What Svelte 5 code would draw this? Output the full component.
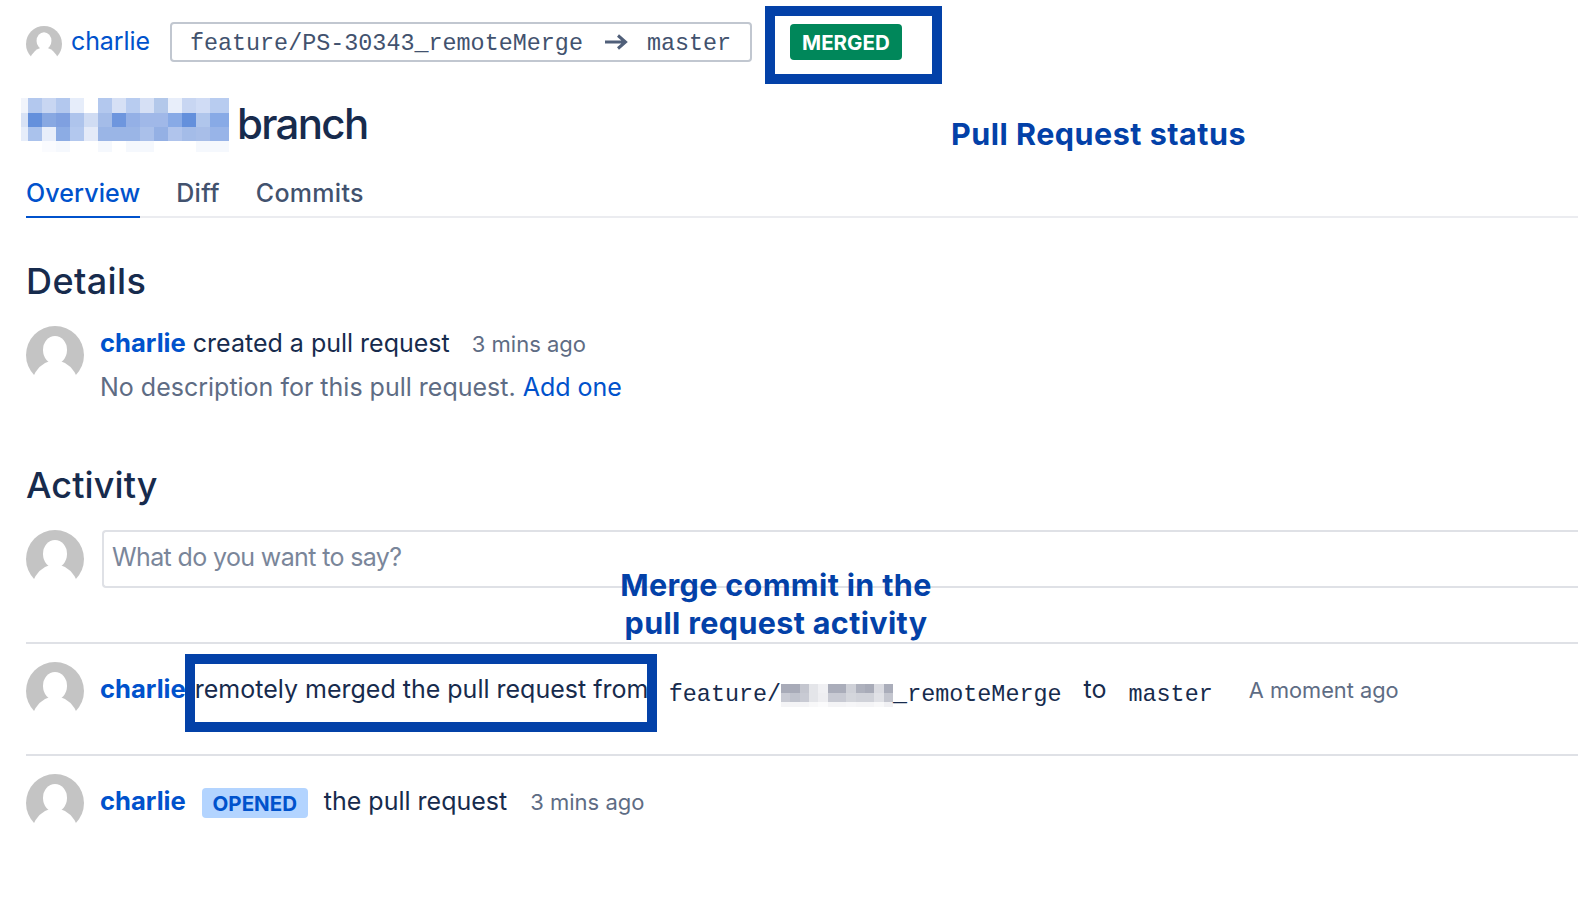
<script>
  const titleMosaic = [
    ['#f1f4fb','#b3c8ee','#c8d6f2','#b3c8ee','#e6edfa','#ffffff','#b3c8ee','#d6e0f5','#b8ccf0','#d6e0f5','#b3c8ea','#e8eefa','#c8d6f2','#d0dcf5','#b8ccf0'],
    ['#d8e2f5','#6490dc','#88a8e2','#7fa0e0','#aec4ec','#d0dcf3','#a4bce8','#6e96de','#94b0e6','#a0b8e8','#a0b8e8','#88aae6','#6490dc','#b0c6ec','#88aae6'],
    ['#e6edfa','#aac2ec','#e8eefa','#8cace4','#b3c8ee','#e4eaf8','#9ab5e6','#9ab5e6','#9ab5e6','#aac0ea','#94b0e4','#b0c4ec','#a4bce8','#a8bee8','#98b4e8'],
    ['#ffffff','#ffffff','#fafbfe','#f5f8fd','#ffffff','#ffffff','#f5f8fd','#ffffff','#f5f8fd','#f5f8fd','#ffffff','#ffffff','#ffffff','#f5f8fd','#f5f8fd']
  ];
  const branchMosaic = [
    ['#a8abb8','#a8abb8','#c4c6cf','#e4e5e9','#f0f0f3','#aaadba','#aaadba','#cfd1d8','#aeb1bd','#a8abb8','#dadbe1','#aaadba'],
    ['#c8cad3','#c0c3cd','#c8cad3','#e4e5e9','#eeeef1','#c8cad3','#c8cad3','#d4d6dc','#d0d2d9','#d0d2d9','#e0e1e6','#c4c6cf'],
    ['#f4f4f6','#f4f4f6','#f4f4f6','#f8f8f9','#fbfbfc','#f4f4f6','#f4f4f6','#f6f6f8','#f4f4f6','#f4f4f6','#f8f8f9','#f0f0f3']
  ];
</script>

{#snippet avatar(cls)}
  <svg class={cls} viewBox="0 0 58 58" aria-hidden="true">
    <circle cx="29" cy="29" r="29" fill="#c4c4c4" />
    <ellipse cx="29" cy="24" rx="12" ry="14" fill="#fff" />
    <path d="M6 53 Q12 38 24 35 L34 35 Q46 38 52 53 L52 58 L6 58 Z" fill="#fff" />
  </svg>
{/snippet}

<div class="page">
  <header class="top">
    {@render avatar('av-small')}
    <a class="author" href="#a">charlie</a>
    <div class="branches">
      <span>feature/PS-30343_remoteMerge</span>
      <svg class="arrow" viewBox="0 0 24 18" aria-hidden="true">
        <path d="M1 9 H21 M14 2.5 L21.5 9 L14 15.5" fill="none" stroke="#505f79" stroke-width="3" />
      </svg>
      <span>master</span>
    </div>
    <div class="frame status-frame"><span class="merged">MERGED</span></div>
  </header>

  <div class="title">
    <div class="mosaic title-mosaic">
      {#each titleMosaic as row}
        {#each row as c}<i style="background:{c}"></i>{/each}
      {/each}
    </div>
    <h1>branch</h1>
  </div>

  <nav class="tabs">
    <a class="tab active" href="#o">Overview</a>
    <a class="tab" href="#d">Diff</a>
    <a class="tab" href="#c">Commits</a>
  </nav>

  <h2 class="details">Details</h2>
  <section class="row created">
    {@render avatar('av')}
    <div>
      <p class="line"><a class="who" href="#a">charlie</a> created a pull request <span class="time first">3 mins ago</span></p>
      <p class="desc">No description for this pull request. <a href="#add">Add one</a></p>
    </div>
  </section>

  <h2 class="activity">Activity</h2>
  <section class="row compose">
    {@render avatar('av')}
    <div class="input">What do you want to say?</div>
  </section>

  <section class="row event merged-row">
    {@render avatar('av')}
    <a class="who" href="#a">charlie</a>
    <div class="frame text-frame">remotely merged the pull request from</div>
    <span class="mono ref">feature/<span class="mosaic branch-mosaic">
      {#each branchMosaic as row}
        {#each row as c}<i style="background:{c}"></i>{/each}
      {/each}
    </span>_remoteMerge</span>
    <span class="to">to</span>
    <span class="mono master">master</span>
    <span class="time moment">A moment ago</span>
  </section>

  <section class="row event opened-row">
    {@render avatar('av')}
    <a class="who" href="#a">charlie</a>
    <span class="opened">OPENED</span>
    <span class="txt">the pull request</span>
    <span class="time ago">3 mins ago</span>
  </section>

  <div class="note note-status">Pull Request status</div>
  <div class="note note-merge">Merge commit in the<br />pull request activity</div>
</div>

<style>
  :global(body) { margin: 0; background: #fff; }
  .page {
    position: relative;
    height: 902px;
    overflow: hidden;
    padding-left: 26px;
    box-sizing: border-box;
    font-family: Inter, "Liberation Sans", sans-serif;
    color: #172b4d;
  }
  a { color: #0052cc; text-decoration: none; }
  p, h1, h2 { margin: 0; }

  .top { display: flex; align-items: flex-start; padding-top: 6px; height: 78px; }
  .av-small { width: 36px; height: 36px; margin-top: 20px; flex: none; }
  .author { font-size: 25px; line-height: 30px; margin: 20px 0 0 9px; letter-spacing: -0.1px; }
  .branches {
    display: flex; align-items: center; box-sizing: border-box;
    height: 40px; margin: 16px 0 0 20px; width: 582px; padding: 3px 0 0 18px;
    border: 2px solid #c1c7d0; border-radius: 4px;
    font: 23.4px "Liberation Mono", monospace; color: #42526e;
  }
  .arrow { width: 24px; height: 18px; margin: -4px 19px 0 21px; }
  .frame { border: 10px solid #0341a8; box-sizing: border-box; }
  .status-frame { width: 177px; height: 78px; margin-left: 13px; padding: 8px 15px; }
  .merged {
    display: block; width: 112px; height: 36px; border-radius: 4px;
    background: #00875a; color: #fff; text-align: center;
    font-size: 20.5px; font-weight: 700; line-height: 38px;
  }

  .title { display: flex; align-items: flex-start; margin: 14px 0 0 -5px; height: 54px; }
  .mosaic { display: grid; }
  .mosaic i { display: block; }
  .title-mosaic {
    grid-template-columns: 7px repeat(13, 14px) 19px;
    grid-template-rows: 15px 14px 14px 11px;
    width: 208px; flex: none;
  }
  h1 { font-size: 42px; font-weight: 500; line-height: 52px; margin-left: 8px; letter-spacing: -1.7px; }

  .tabs { display: flex; gap: 36px; margin-top: 20px; border-bottom: 2px solid #ebecf0; height: 44px; }
  .tab { font-size: 25px; font-weight: 500; color: #42526e; line-height: 42px; height: 46px; box-sizing: border-box; letter-spacing: 0.3px; }
  .tab.active { color: #0052cc; border-bottom: 2px solid #0052cc; letter-spacing: 0.1px; }

  h2 { font-size: 36px; font-weight: 500; line-height: 42px; letter-spacing: 0.1px; }
  .details { margin: 42px 0 0 0; letter-spacing: 0.4px; }
  .activity { margin: -1px 0 0; }

  .row { display: flex; align-items: flex-start; }
  .av { width: 58px; height: 58px; flex: none; }
  .created { margin-top: 24px; height: 139px; gap: 16px; }
  .line { font-size: 25px; line-height: 36px; margin-top: -1px; }
  .who { font-weight: 700; font-size: 25.6px; }
  .time { color: #5e6c84; font-size: 22px; }
  .first { margin-left: 15px; }
  .desc { font-size: 25px; line-height: 36px; margin-top: 7px; color: #5e6c84; }

  .compose { margin-top: 24px; height: 112px; border-bottom: 2px solid #dfe1e6; gap: 18px; }
  .input {
    flex: 1; height: 58px; box-sizing: border-box;
    border: 2px solid #dfe1e6; border-right: 0; border-radius: 4px 0 0 4px;
    padding-left: 8px; font-size: 25px; line-height: 50px; color: #7a869a; letter-spacing: -0.63px;
  }

  .event { font-size: 25px; line-height: 36px; }
  .event .who { margin: 27px 0 0 16px; }
  .merged-row { height: 110px; border-bottom: 2px solid #dfe1e6; }
  .event .av { margin-top: 18px; }
  .text-frame { width: 472px; height: 78px; padding-top: 7px; white-space: nowrap; margin: 10px 0 0 -1px; flex: none; }
  .mono { font: 23.4px/36px "Liberation Mono", monospace; margin-top: 33px; }
  .ref { display: inline-flex; margin-left: 12px; }
  .branch-mosaic {
    grid-template-columns: repeat(12, 9.33px);
    grid-template-rows: 9px 9px 5px;
    width: 112px; height: 23px; margin-top: 7px; flex: none;
  }
  .to { margin: 27px 0 0 22px; }
  .master { margin-left: 22px; }
  .moment { margin: 28px 0 0 36px; line-height: 36px; font-size: 21.8px; }
  .opened-row { height: 100px; }
  .opened {
    margin: 32px 0 0 16px; height: 30px; width: 106px; border-radius: 4px; background: #b3d4ff; color: #0052cc;
    text-align: center; font-size: 20.5px; font-weight: 700; line-height: 31px;
  }
  .txt { margin: 27px 0 0 16px; }
  .ago { margin: 28px 0 0 23px; line-height: 36px; }

  .note {
    position: absolute; color: #0341a8; font-weight: 700; font-size: 30.5px;
    line-height: 38px; text-align: center; white-space: nowrap; letter-spacing: 0.5px;
  }
  .note-status { left: 951px; top: 115px; }
  .note-merge { left: 776px; top: 566px; transform: translateX(-50%); letter-spacing: 0.35px; }
</style>
